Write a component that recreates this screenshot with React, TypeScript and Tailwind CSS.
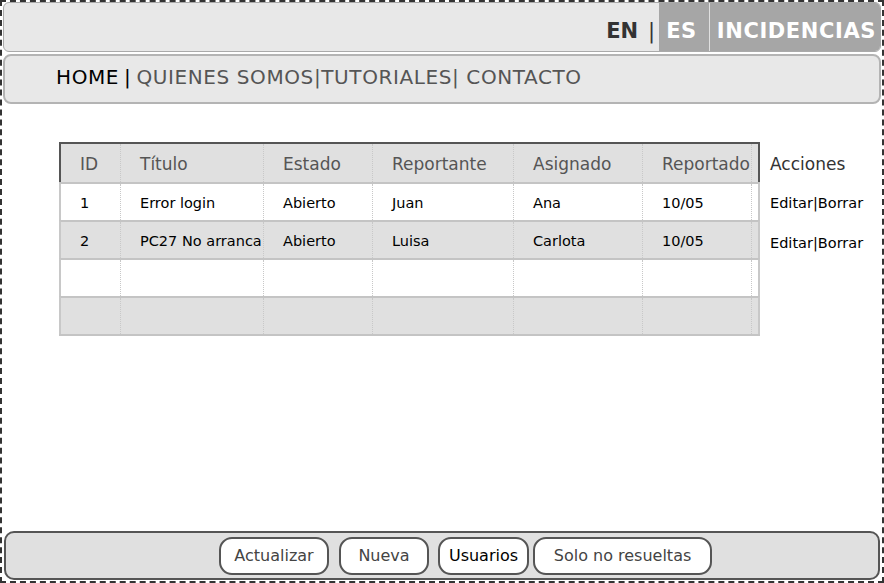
const font = "font-['Comic_Sans_MS','DejaVu_Sans',sans-serif]";

const cols = [
  { w: "w-[60px]", label: "ID" },
  { w: "w-[143px]", label: "Título" },
  { w: "w-[109px]", label: "Estado" },
  { w: "w-[141px]", label: "Reportante" },
  { w: "w-[129px]", label: "Asignado" },
  { w: "w-[109px]", label: "Reportado" },
];

const rows = [
  ["1", "Error login", "Abierto", "Juan", "Ana", "10/05"],
  ["2", "PC27 No arranca", "Abierto", "Luisa", "Carlota", "10/05"],
  ["", "", "", "", "", ""],
  ["", "", "", "", "", ""],
];

const Row = ({ cells, bg, header }: { cells: string[]; bg: string; header?: boolean }) => (
  <div
    className={`flex ${bg} ${
      header
        ? "h-[40px] border-t-2 border-x-2 border-[#555]"
        : "h-[38px] border-t-2 border-t-[#c4c4c4] border-x-2 border-x-[#c8c8c8]"
    }`}
  >
    {cols.map((c, i) => (
      <div
        key={i}
        className={`${c.w} shrink-0 flex items-center pl-[19px] border-r border-dotted border-[#c8c8c8] whitespace-nowrap ${
          header ? "text-[17px] text-[#555] pt-[3px]" : "text-[14.5px] text-black pt-[3px]"
        }`}
      >
        {header ? c.label : cells[i]}
      </div>
    ))}
    <div className="flex-1" />
  </div>
);

const Btn = ({ label, w, dark }: { label: string; w: string; dark?: boolean }) => (
  <div
    className={`${w} h-[38px] shrink-0 rounded-[13px] border-2 border-[#555] bg-white flex items-center justify-center text-[16px] ${
      dark ? "text-black" : "text-[#444]"
    }`}
  >
    {label}
  </div>
);

export default function App() {
  return (
    <div className={`${font} w-[884px] h-[583px] bg-white border-2 border-dashed border-[#333] flex flex-col px-px`}>
      {/* barra superior */}
      <div className="h-[50px] shrink-0 rounded-md border border-[#aaa] bg-[#e8e8e8] flex justify-end items-stretch overflow-hidden">
        <div className="flex items-center text-[21px] font-bold text-[#333] pr-[4px] pt-[9px]">
          EN <span className="ml-[10px] font-normal">|</span>
        </div>
        <div className="bg-[#a6a6a6] flex items-center text-white text-[21px] font-bold tracking-[0.6px]">
          <span className="pl-[7px] pr-[12px] pt-[9px]">ES</span>
          <span className="w-px h-full bg-[#e0e0e0]" />
          <span className="pl-[7px] pr-[4px] pt-[9px]">INCIDENCIAS</span>
        </div>
      </div>

      {/* navegación */}
      <div className="h-[50px] shrink-0 mt-[2px] rounded-lg border-2 border-[#b4b4b4] bg-[#e8e8e8] flex items-center pl-[51px] pb-[4px] text-[20px] tracking-[0.6px]">
        <span className="text-black">HOME</span>
        <span className="text-black mx-[5px]">|</span>
        <span className="text-[#555]">QUIENES SOMOS|TUTORIALES| CONTACTO</span>
      </div>

      {/* tabla */}
      <div className="mt-[38px] flex pl-[56px]">
        <div className="w-[701px] shrink-0 border-b-2 border-[#c4c4c4]">
          <Row cells={[]} bg="bg-[#e0e0e0]" header />
          {rows.map((r, i) => (
            <Row key={i} cells={r} bg={i % 2 === 0 ? "bg-white" : "bg-[#e0e0e0]"} />
          ))}
        </div>
        <div className="pl-[10px] whitespace-nowrap">
          <div className="h-[42px] flex items-center pt-[3px] text-[17px] text-[#333]">Acciones</div>
          <div className="h-[40px] flex items-center text-[14.5px] text-black">Editar|Borrar</div>
          <div className="h-[40px] flex items-center text-[14.5px] text-black">Editar|Borrar</div>
        </div>
      </div>

      <div className="flex-1" />

      {/* barra inferior */}
      <div className="h-[49px] shrink-0 mx-px mb-px rounded-[10px] border-2 border-[#555] bg-[#e0e0e0] flex items-center pl-[213px]">
        <Btn label="Actualizar" w="w-[110px]" />
        <div className="w-[10px]" />
        <Btn label="Nueva" w="w-[90px]" />
        <div className="w-[9px]" />
        <Btn label="Usuarios" w="w-[91px]" dark />
        <div className="w-[4px]" />
        <Btn label="Solo no resueltas" w="w-[179px]" />
      </div>
    </div>
  );
}
